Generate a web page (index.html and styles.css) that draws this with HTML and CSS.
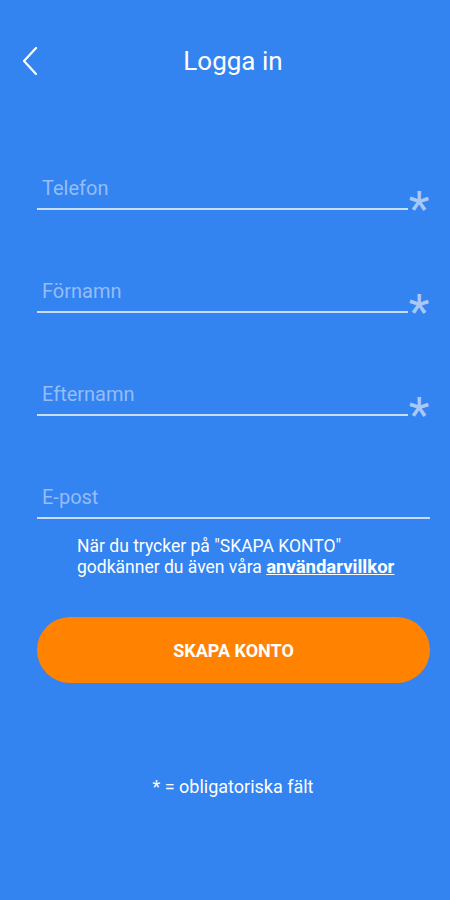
FILE: index.html
```html
<!DOCTYPE html>
<html>
<head>
  <title>Logga in</title>
  <link rel="stylesheet" href="styles.css">
</head>
<body>
  <div class="header">
    <a class="back" href="#">
      <svg width="16" height="28" viewBox="0 0 16 28"><polyline points="14,1 2,14 14,27" fill="none" stroke="#fff" stroke-width="2.2" stroke-linecap="round" stroke-linejoin="round"/></svg>
    </a>
    <h1>Logga in</h1>
  </div>

  <div class="form">
    <div class="field">
      <div class="input">Telefon</div>
      <span class="req">*</span>
    </div>
    <div class="field">
      <div class="input">Förnamn</div>
      <span class="req">*</span>
    </div>
    <div class="field">
      <div class="input">Efternamn</div>
      <span class="req">*</span>
    </div>
    <div class="field">
      <div class="input">E-post</div>
    </div>
  </div>

  <p class="terms">När du trycker på "SKAPA KONTO"<br>godkänner du även våra <a href="#">användarvillkor</a></p>

  <button class="create">SKAPA KONTO</button>

  <p class="note">* = obligatoriska fält</p>
</body>
</html>
```

FILE: styles.css
```css
body { margin: 0; background: #3383f1; color: #fff; font-family: Roboto, "Noto Sans", sans-serif; height: 900px; }
.header { display: flex; align-items: center; justify-content: center; position: relative; height: 50px; margin-top: 36px; padding-left: 16px; }
.back { position: absolute; left: 22px; top: 11px; display: block; line-height: 0; }
h1 { margin: 0; font-size: 26px; font-weight: 400; line-height: 50px; }
.form { display: flex; flex-direction: column; gap: 70px; margin: 91px 20px 0 37px; }
.field { display: flex; align-items: flex-end; }
.input { flex: 1; font-size: 20px; line-height: 22px; color: #93bdf7; padding: 0 5px 9px; border-bottom: 2px solid #c9ddfb; }
.req { width: 22px; font-size: 48px; line-height: 30px; color: #a8c9f8; margin-bottom: -14px; text-align: center; }
.terms { margin: 17px 0 0 77px; font-size: 17.5px; line-height: 21px; }
.terms a { color: #fff; font-size: 18.5px; font-weight: 700; text-decoration: underline; }
.create { display: block; margin: 39px 20px 0 37px; width: 393px; height: 66px; border: none; border-radius: 33px; background: #ff8300; color: #fff; font-family: Roboto, sans-serif; font-size: 18px; font-weight: 700; cursor: pointer; }
.note { margin: 94px 0 0; padding-left: 16px; text-align: center; font-size: 18px; line-height: 20px; }
```
